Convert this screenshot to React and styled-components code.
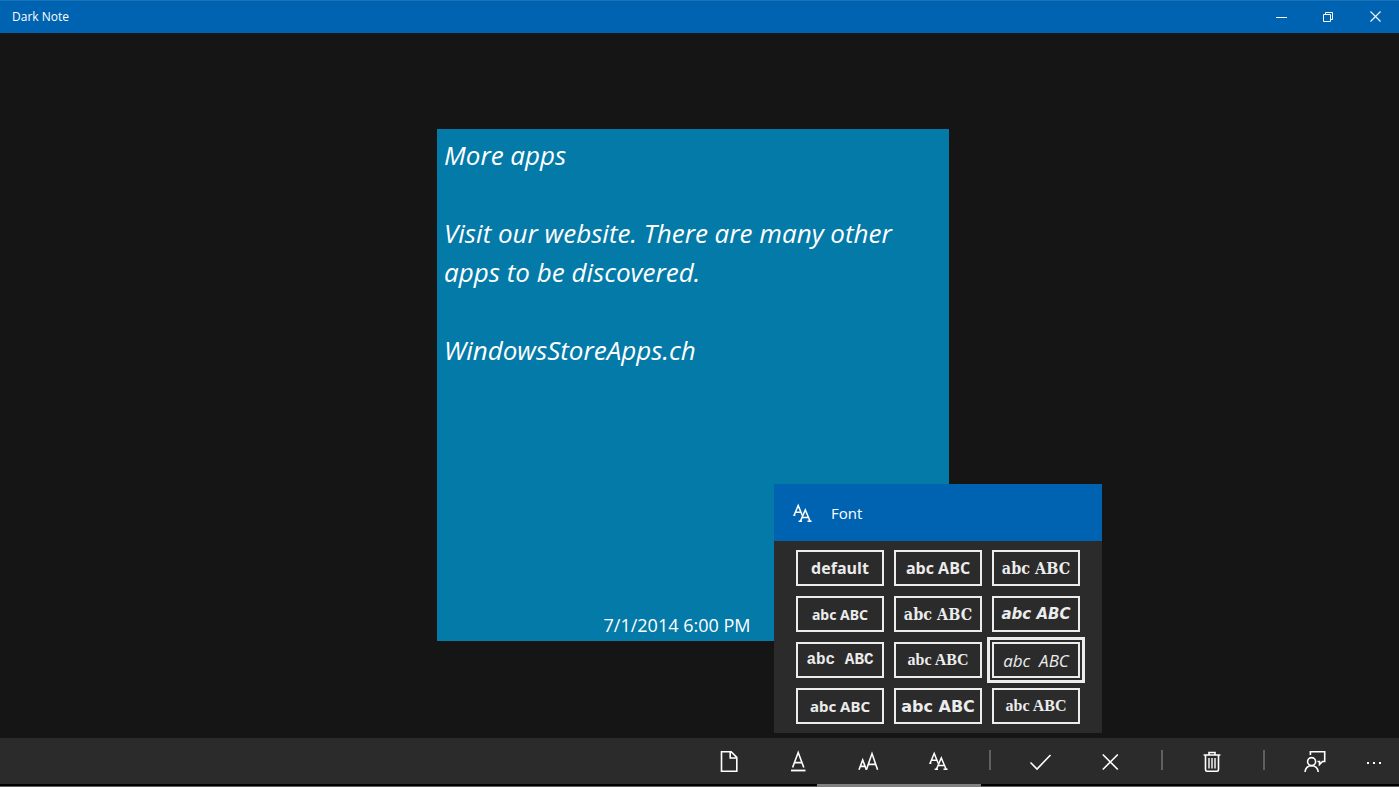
import React, { useState } from 'react';
import styled, { createGlobalStyle } from 'styled-components';

const GlobalStyle = createGlobalStyle`
  * { box-sizing: border-box; }
  body {
    margin: 0;
    background: #151515;
    color: #fff;
    font-family: "Open Sans", "Noto Sans", sans-serif;
  }
  button { font: inherit; color: inherit; }
`;

const fonts = [
  { label: 'default', family: '"Open Sans"', size: 16 },
  { label: 'abc ABC', family: '"Open Sans"', size: 16 },
  { label: 'abc ABC', family: '"DejaVu Serif Condensed"', size: 16 },
  { label: 'abc ABC', family: '"Noto Sans"', size: 14 },
  { label: 'abc ABC', family: '"DejaVu Serif Condensed"', size: 16 },
  { label: 'abc ABC', family: '"DejaVu Sans"', size: 15, italic: true },
  { label: 'abc ABC', family: '"Liberation Mono"', size: 16 },
  { label: 'abc ABC', family: '"Liberation Serif"', size: 16 },
  { label: 'abc  ABC', family: '"Open Sans"', size: 17, italic: true, weight: 500 },
  { label: 'abc ABC', family: '"Noto Sans"', size: 15 },
  { label: 'abc ABC', family: '"DejaVu Sans"', size: 16 },
  { label: 'abc ABC', family: '"Liberation Serif"', size: 16 },
];

const Glyph = ({ size = 24, children }) => (
  <svg width={size} height={size} viewBox={`0 0 ${size} ${size}`} fill="none" stroke="currentColor" strokeWidth="1.6" aria-hidden="true">
    {children}
  </svg>
);

const FontGlyph = () => (
  <Glyph>
    <path strokeWidth="1.5" d="M3 14.5L7.2 4.5L11.3 14.5M4.4 11.2H10M2.3 14.3H4.4" />
    <path strokeWidth="1.5" d="M9.5 20L14.3 9L19 20M11 16.4H17.5M7.6 20.3H11M16.5 20.3H20.5" />
  </Glyph>
);

const App = () => {
  const [selected, setSelected] = useState(8);
  const [open, setOpen] = useState(true);

  return (
    <Page>
      <GlobalStyle />
      <TitleBar>
        <Title>Dark Note</Title>
        <WindowButton aria-label="Minimize">
          <Glyph size={12}><path strokeWidth="1" d="M0 6.5H11" /></Glyph>
        </WindowButton>
        <WindowButton aria-label="Restore">
          <Glyph size={12}><path strokeWidth="1" d="M.5 3.5H7.5V10.5H.5ZM2.5 3.5V1.5H9.5V8.5H7.5" /></Glyph>
        </WindowButton>
        <WindowButton aria-label="Close">
          <Glyph size={12}><path strokeWidth="1.1" d="M.5 .5L10.5 10.5M10.5 .5L.5 10.5" /></Glyph>
        </WindowButton>
      </TitleBar>

      <Stage>
        <Note>
          <NoteText>
            {'More apps\n\nVisit our website. There are many other apps to be discovered.\n\nWindowsStoreApps.ch'}
          </NoteText>
          <NoteDate>7/1/2014 6:00 PM</NoteDate>
        </Note>
      </Stage>

      <AppBar>
        <BarButton aria-label="New note">
          <Glyph><path d="M4.5 2.8H14.2L19.8 8.4V22.2H4.5ZM13.2 2.8V9H19.8" /></Glyph>
        </BarButton>
        <BarButton aria-label="Font color">
          <Glyph>
            <path d="M5.6 18.5L11.2 3.5L16.8 18.5M7.6 13.6H14.8" />
            <path d="M4 21.5H18.5" strokeWidth="1.8" />
          </Glyph>
        </BarButton>
        <BarButton aria-label="Font size">
          <Glyph>
            <path d="M2 20.8L5.7 11L9.4 20.8M3.4 17.4H8" />
            <path d="M9.4 20.8L15 4.6L20.6 20.8M11.3 15.4H18.7" />
          </Glyph>
        </BarButton>
        <Anchor>
          <BarButton aria-label="Font" aria-expanded={open} onClick={() => setOpen(!open)}>
            <FontGlyph />
          </BarButton>
          {open && (
            <Flyout>
              <FlyoutHeader><FontGlyph />Font</FlyoutHeader>
              <FontGrid>
                {fonts.map((font, i) => (
                  <FontButton
                    key={i}
                    $family={font.family}
                    $size={font.size}
                    $italic={font.italic}
                    $weight={font.weight}
                    $selected={i === selected}
                    aria-pressed={i === selected}
                    onClick={() => setSelected(i)}
                  >
                    {font.label}
                  </FontButton>
                ))}
              </FontGrid>
            </Flyout>
          )}
        </Anchor>
        <Separator />
        <BarButton aria-label="Accept">
          <Glyph><path d="M1.5 13.5L8 20L21.5 6" /></Glyph>
        </BarButton>
        <BarButton aria-label="Cancel">
          <Glyph><path d="M3.8 5.5L18.8 20.5M18.8 5.5L3.8 20.5" /></Glyph>
        </BarButton>
        <Separator />
        <BarButton aria-label="Delete">
          <Glyph>
            <path d="M2.6 6H19.4M4.5 6V20.6Q4.5 22.3 6 22.3H16Q17.5 22.3 17.5 20.6V6M8 6V3.5H14V6" />
            <path d="M8 9V19.5M11 9V19.5M14 9V19.5" strokeWidth="1.4" />
          </Glyph>
        </BarButton>
        <Separator />
        <BarButton aria-label="Feedback">
          <Glyph>
            <circle cx="8.6" cy="12.6" r="4" />
            <path d="M2 23C2.4 19 5 16.7 8.6 16.7S14.8 19 15.3 23" />
            <path d="M7.4 6V2.8H21.7V12.5H19.5L16.5 15.5V12.5H14.5" />
          </Glyph>
        </BarButton>
        <MoreButton aria-label="More">
          <Glyph>
            <path stroke="none" fill="currentColor" d="M4 13h2v2H4zM10 13h2v2h-2zM16 13h2v2h-2z" />
          </Glyph>
        </MoreButton>
      </AppBar>
      <ScrollTrack><ScrollThumb /></ScrollTrack>
    </Page>
  );
};

export default App;

const Page = styled.div`
  display: flex;
  flex-direction: column;
  min-height: 100vh;
`;

const TitleBar = styled.header`
  display: flex;
  height: 33px;
  background: #0063b1;
  border-top: 1px solid #1a73b9;
`;

const Title = styled.h1`
  flex: 1;
  margin: 0;
  padding-left: 12px;
  font-size: 12px;
  font-weight: 400;
  line-height: 31px;
`;

const WindowButton = styled.button`
  display: flex;
  align-items: center;
  justify-content: center;
  width: 47px;
  padding: 0;
  border: none;
  background: transparent;
`;

const Stage = styled.main`
  flex: 1;
  display: flex;
  align-items: center;
  justify-content: center;
  padding-right: 13px;
  padding-bottom: 2px;
`;

const Note = styled.article`
  display: flex;
  flex-direction: column;
  width: 512px;
  min-height: 512px;
  padding: 7px;
  padding-bottom: 2px;
  background: #047aa8;
`;

const NoteText = styled.p`
  flex: 1;
  margin: 0;
  font-family: "Open Sans", sans-serif;
  font-style: italic;
  font-size: 26px;
  line-height: 39px;
  white-space: pre-wrap;
`;

const NoteDate = styled.time`
  align-self: center;
  padding-right: 32px;
  font-size: 18px;
  line-height: 28px;
`;

const AppBar = styled.footer`
  display: flex;
  justify-content: flex-end;
  height: 46px;
  background: #2b2b2b;
`;

const BarButton = styled.button`
  display: flex;
  align-items: center;
  justify-content: center;
  width: 70px;
  height: 46px;
  padding: 0;
  border: none;
  background: transparent;
`;

const MoreButton = styled(BarButton)`
  width: 49px;
`;

const Separator = styled.span`
  width: 2px;
  height: 20px;
  margin: 12px 15px;
  background: #606060;
`;

const Anchor = styled.div`
  position: relative;
`;

const Flyout = styled.section`
  position: absolute;
  left: -130px;
  bottom: 51px;
  width: 328px;
  background: #2b2b2b;
`;

const FlyoutHeader = styled.h2`
  display: flex;
  align-items: center;
  gap: 16px;
  height: 57px;
  margin: 0;
  padding-left: 17px;
  background: #0063b1;
  font-size: 15px;
  font-weight: 400;
`;

const FontGrid = styled.div`
  display: grid;
  grid-template-columns: repeat(3, 88px);
  justify-content: center;
  gap: 10px;
  padding: 9px 0;
`;

const FontButton = styled.button`
  height: 36px;
  padding: 0;
  border: 2px solid #ececec;
  background: #2b2b2b;
  color: #ececec;
  font-family: ${props => props.$family}, sans-serif;
  font-size: ${props => props.$size}px;
  font-weight: ${props => props.$weight || 700};
  font-style: ${props => (props.$italic ? 'italic' : 'normal')};
  white-space: pre;
  outline: ${props => (props.$selected ? '3px solid #ececec' : 'none')};
  outline-offset: 2px;
`;

const ScrollTrack = styled.div`
  height: 3px;
  background: #606060;
  border-top: 2px solid #000;
`;

const ScrollThumb = styled.div`
  width: 164px;
  height: 3px;
  margin-top: -2px;
  margin-left: 58.4%;
  background: #808080;
`;
